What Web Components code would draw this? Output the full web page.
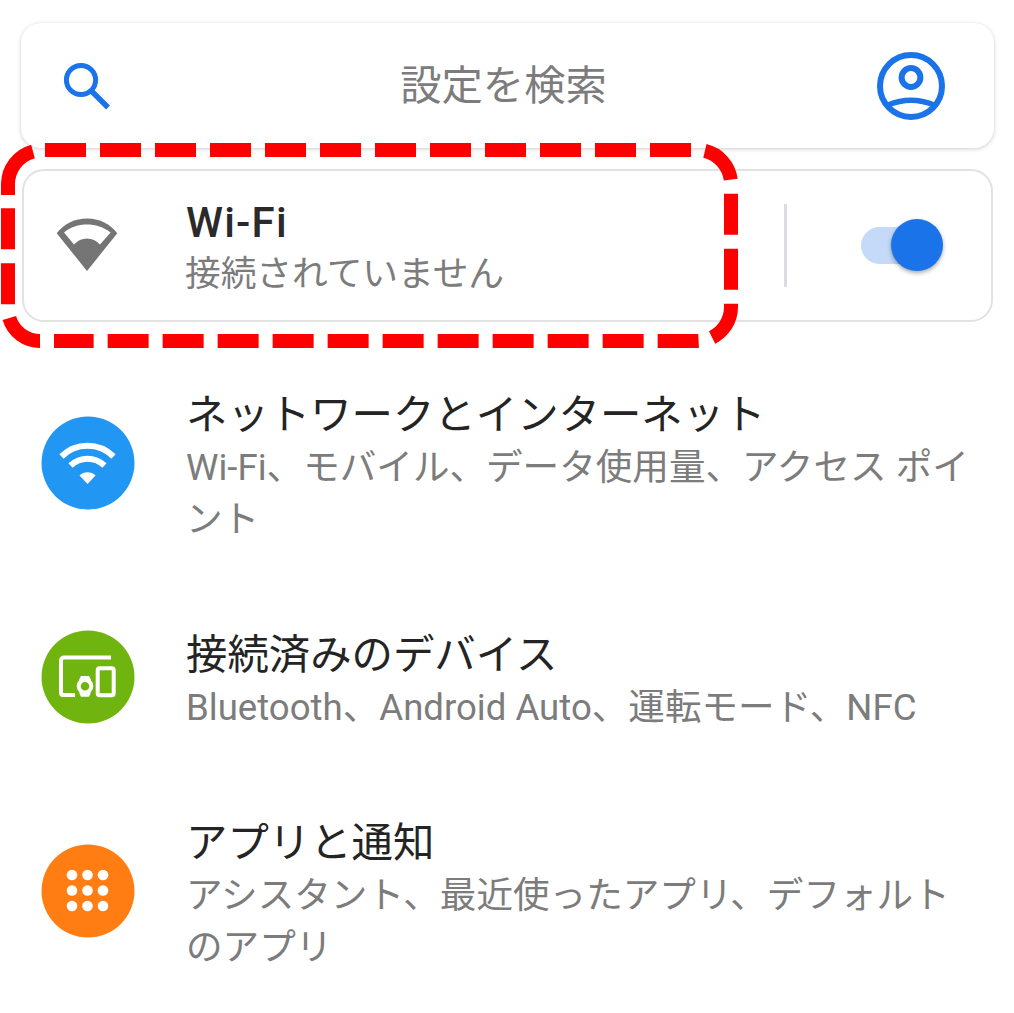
<!DOCTYPE html>
<html lang="ja"><head><meta charset="utf-8"><title>設定</title>
<style>
html,body{margin:0;padding:0;background:#fff}
body{font-family:Roboto,"Noto Sans CJK JP",sans-serif;width:1014px;height:1013px;overflow:hidden}
</style></head><body>
<settings-page>
  <search-card placeholder="設定を検索"></search-card>
  <wifi-card title-text="Wi-Fi" summary="接続されていません"></wifi-card>
  <settings-row title-text="ネットワークとインターネット">
    <svg slot="icon" width="94" height="94" viewBox="0 0 94 94"><circle cx="47" cy="47" r="46.5" fill="#2196f3"/><g fill="none" stroke="#fff" stroke-width="6"><path d="M20.5 40.5a37 37 0 0 1 52 0"/><path d="M29.5 49.5a24.5 24.5 0 0 1 34 0"/></g><path d="M46.5 68 38.5 59.5a11.5 11.5 0 0 1 16 0z" fill="#fff"/></svg>
    Wi-Fi、モバイル、データ使用量、アクセス ポイント
  </settings-row>
  <settings-row title-text="接続済みのデバイス">
    <svg slot="icon" width="94" height="94" viewBox="0 0 94 94"><circle cx="47" cy="47" r="46.5" fill="#70b50f"/><g fill="none" stroke="#fff" stroke-width="4"><path d="M70 27.500H23a3 3 0 0 0-3 3V63a2 2 0 0 0 2 2H34"/><rect x="56.700" y="38.200" width="16" height="27" rx="2"/><circle cx="44" cy="56.200" r="6.300"/></g><path d="M38 50 40 46h8l2 4zM38 62.500 40 66.800h8l2-4.300z" fill="#fff"/></svg>
    Bluetooth、Android Auto、運転モード、NFC
  </settings-row>
  <settings-row title-text="アプリと通知">
    <svg slot="icon" width="94" height="94" viewBox="0 0 94 94"><circle cx="47" cy="47" r="46.500" fill="#ff7d13"/><g fill="#fff"><circle cx="31" cy="31" r="5.300"/><circle cx="46.500" cy="31" r="5.300"/><circle cx="62" cy="31" r="5.300"/><circle cx="31" cy="46.500" r="5.300"/><circle cx="46.500" cy="46.500" r="5.300"/><circle cx="62" cy="46.500" r="5.300"/><circle cx="31" cy="62" r="5.300"/><circle cx="46.500" cy="62" r="5.300"/><circle cx="62" cy="62" r="5.300"/></g></svg>
    アシスタント、最近使ったアプリ、デフォルトのアプリ
  </settings-row>
</settings-page>
<script>
function shell(el,html){el.attachShadow({mode:'open'}).innerHTML=html;}
customElements.define('settings-page',class extends HTMLElement{constructor(){super();shell(this,`<style>
:host{display:block;position:relative;width:1014px;height:1013px;padding-top:23px;box-sizing:border-box}
svg{position:absolute;left:0;top:0;pointer-events:none}
</style><slot></slot>
<svg width="738" height="350" viewBox="0 0 738 350"><g fill="none" stroke="#f00" stroke-width="14"><path d="M45 150H697a34 34 0 0 1 34 34V307a34 34 0 0 1-34 34H54" stroke-dasharray="41 14"/><path d="M40 341a32 32 0 0 1-32-32V195" stroke-dasharray="41 14"/><path d="M8 195V184a34 34 0 0 1 25-32.500"/></g></svg>`);}});
customElements.define('search-card',class extends HTMLElement{constructor(){super();shell(this,`<style>
:host{display:flex;align-items:center;justify-content:space-between;box-sizing:border-box;width:973px;height:125px;margin-left:21px;padding:0 49px 0 40px;background:#fff;border-radius:20px;box-shadow:0 1px 4px rgba(0,0,0,.2)}
.ph{text-align:center;font-size:41.300px;line-height:52px;color:#7c7c7c;padding-left:19px;flex:1}
svg{display:block;flex:none}
</style>
<svg width="50" height="50" viewBox="0 0 50 50"><circle cx="20" cy="19" r="14.600" fill="none" stroke="#1a73e8" stroke-width="5"/><path d="M30.500 30 47 46.500" stroke="#1a73e8" stroke-width="5.500" fill="none"/></svg>
<div class="ph">${this.getAttribute('placeholder')}</div>
<svg width="68" height="68" viewBox="0 0 68 68"><circle cx="34" cy="34" r="31" fill="none" stroke="#1a73e8" stroke-width="6"/><circle cx="34" cy="25.500" r="9.400" fill="none" stroke="#1a73e8" stroke-width="6"/><path d="M11 53Q34 43.500 57 53" fill="none" stroke="#1a73e8" stroke-width="5.500"/></svg>`);}});
customElements.define('wifi-card',class extends HTMLElement{constructor(){super();shell(this,`<style>
:host{display:flex;align-items:center;box-sizing:border-box;width:971px;height:153px;margin:21px 0 67px 22px;padding-left:31px;background:#fff;border:2px solid #e2e2e2;border-radius:22px}
svg{display:block;flex:none}
.txt{margin-left:67px;flex:1;padding-top:8px}
.t{font-size:42px;font-weight:500;letter-spacing:1.200px;line-height:52px;color:#2a2a2a;margin-top:-2px}
.s{font-size:35.700px;line-height:52px;color:#7c7c7c;margin-top:-1px;margin-left:-1px}
.div{width:3px;height:83px;background:#dadce0;margin-right:74px}
.sw{position:relative;width:82px;height:54px;margin-right:48px}
.track{position:absolute;left:0;top:8px;width:70px;height:37px;border-radius:19px;background:#c4daf8}
.thumb{position:absolute;left:30px;top:0;width:52px;height:52px;border-radius:50%;background:#1a73e8;box-shadow:0 2px 4px rgba(0,0,0,.35)}
</style>
<svg width="64" height="56" viewBox="0 0 64 56"><path d="M32 53 1.700 15.200C9.500 5.500 20 .5 32 .5S54.500 5.500 62.300 15.200z" fill="#757575"/><path d="M19 26.500 9 14.500C15.500 9 23.500 6.500 32 6.500S48.500 9 55.600 14.500L45 26.500C41.500 22.500 37 20.500 32 20.500S22.500 22.500 19 26.500z" fill="#fff"/></svg>
<div class="txt"><div class="t">${this.getAttribute('title-text')}</div><div class="s">${this.getAttribute('summary')}</div></div>
<div class="div"></div>
<div class="sw"><div class="track"></div><div class="thumb"></div></div>`);}});
customElements.define('settings-row',class extends HTMLElement{constructor(){super();shell(this,`<style>
:host{display:flex;align-items:center;width:934px;margin:0 0 83px 41px}
.ic{flex:none;width:94px;height:94px;margin-right:51px;margin-bottom:10px}
.txt{flex:1;min-width:0}
.t{font-size:41.400px;line-height:52px;color:#242424;margin-bottom:1px}
.s{font-size:36.600px;line-height:52px;color:#7c7c7c}
</style>
<div class="ic"><slot name="icon"></slot></div>
<div class="txt"><div class="t">${this.getAttribute('title-text')}</div><div class="s"><slot></slot></div></div>`);}});
</script>
</body></html>
